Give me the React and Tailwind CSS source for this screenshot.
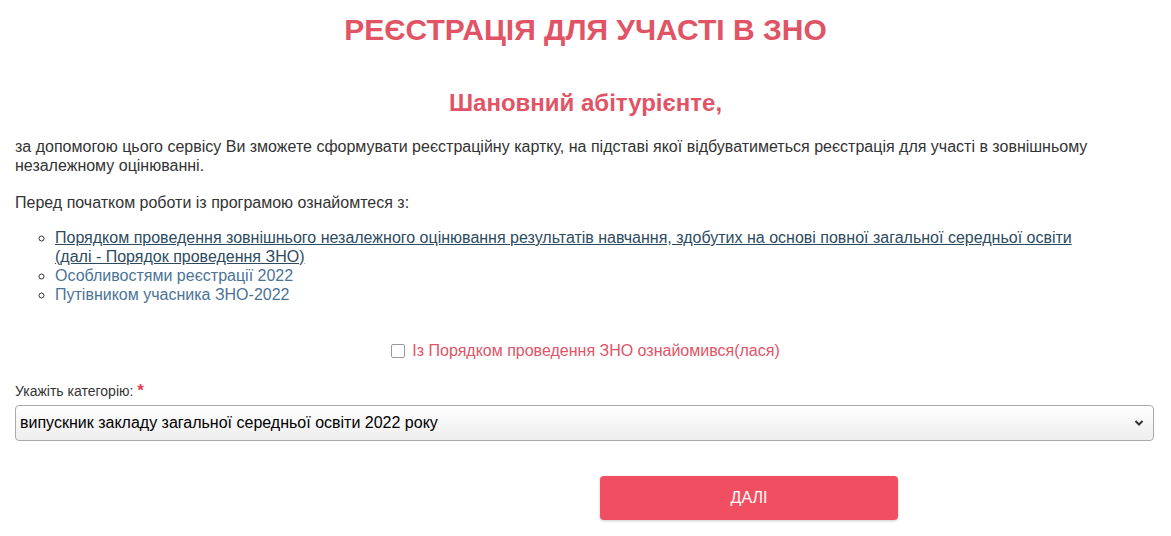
import { useState } from 'react';

export default function App() {
  const [agreed, setAgreed] = useState(false);
  const [category, setCategory] = useState('graduate');

  return (
    <div className="min-h-[536px] bg-white font-['Liberation_Sans',Arial,sans-serif] text-[#333] px-[15px]">
      <h1 className="pt-[13px] text-center text-[30px] leading-[34px] font-bold text-[#e05466]">
        РЕЄСТРАЦІЯ ДЛЯ УЧАСТІ В ЗНО
      </h1>

      <h2 className="mt-[42px] text-center text-[24px] leading-[28px] font-bold text-[#e05466]">
        Шановний абітурієнте,
      </h2>

      <p className="mt-[20px] text-[16px] leading-[19px]">
        за допомогою цього сервісу Ви зможете сформувати реєстраційну картку, на підставі якої відбуватиметься
        реєстрація для участі в зовнішньому незалежному оцінюванні.
      </p>

      <p className="mt-[18px] text-[16px] leading-[19px]">Перед початком роботи із програмою ознайомтеся з:</p>

      <ul className="mt-[16px] pl-[40px] pr-[60px] list-[circle] text-[16px] leading-[19px]">
        <li>
          <a href="#" className="text-[#2d4b60] underline">
            Порядком проведення зовнішнього незалежного оцінювання результатів навчання, здобутих на основі повної
            загальної середньої освіти (далі - Порядок проведення ЗНО)
          </a>
        </li>
        <li>
          <a href="#" className="text-[#4b7396]">Особливостями реєстрації 2022</a>
        </li>
        <li>
          <a href="#" className="text-[#4b7396]">Путівником учасника ЗНО-2022</a>
        </li>
      </ul>

      {/* Agreement */}
      <label className="mt-[37px] flex items-center justify-center gap-[7px] text-[16px] leading-[19px] text-[#e05466] cursor-pointer">
        <input
          type="checkbox"
          checked={agreed}
          onChange={() => setAgreed(!agreed)}
          className="appearance-none w-[14px] h-[14px] border border-[#999] rounded-[2px] bg-white checked:bg-[#e05466]"
        />
        <span>Із Порядком проведення ЗНО ознайомився(лася)</span>
      </label>

      <div className="mt-[22px] text-[14px] leading-[17px] text-[#333]">
        Укажіть категорію: <span className="text-[#e0404f] font-bold text-[17px]">*</span>
      </div>

      <div className="relative mt-[5px] mr-[2px]">
        <select
          value={category}
          onChange={(e) => setCategory(e.target.value)}
          className="appearance-none w-full h-[36px] pl-[4px] pr-[30px] border border-[#aaa] rounded-[4px] bg-gradient-to-b from-white to-[#eeeeee] text-[16px] text-black font-['Liberation_Sans',Arial,sans-serif]"
        >
          <option value="graduate">випускник закладу загальної середньої освіти 2022 року</option>
          <option value="past">випускник минулих років</option>
        </select>
        <svg
          className="absolute right-[10px] top-[14px] w-[10px] h-[8px] pointer-events-none"
          viewBox="0 0 10 8"
          fill="none"
          stroke="#333"
          strokeWidth="2"
        >
          <path d="M1.5 2l3.5 3.5L8.5 2" />
        </svg>
      </div>

      <div className="mt-[35px] pl-[585px]">
        <button className="w-[298px] h-[44px] rounded-[4px] bg-[#f24e61] text-white text-[16px] shadow-[0_1px_3px_rgba(0,0,0,0.2)]">
          ДАЛІ
        </button>
      </div>
    </div>
  );
}
